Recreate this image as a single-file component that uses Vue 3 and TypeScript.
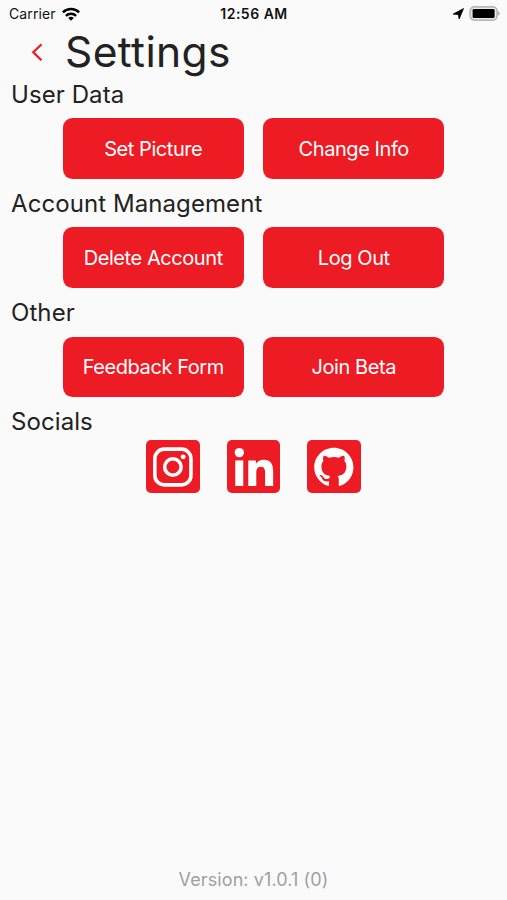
<script setup lang="ts">
interface Section {
  title: string
  actions: string[]
}

const sections: Section[] = [
  { title: 'User Data', actions: ['Set Picture', 'Change Info'] },
  { title: 'Account Management', actions: ['Delete Account', 'Log Out'] },
  { title: 'Other', actions: ['Feedback Form', 'Join Beta'] },
]
</script>

<template>
  <div class="screen">
    <div class="status">
      <div class="carrier">
        <span>Carrier</span>
        <svg class="wifi" viewBox="0 0 18 14" width="18" height="14">
          <g fill="none" stroke="#000" stroke-width="2.5">
            <path d="M0.9 5.3A11.6 11.6 0 0 1 17.1 5.3" />
            <path d="M3.9 8.9A7.3 7.3 0 0 1 14.1 8.9" />
          </g>
          <path d="M9 13.8L6.2 11A4.2 4.2 0 0 1 11.8 11Z" fill="#000" />
        </svg>
      </div>
      <span class="clock">12:56 AM</span>
      <div class="power">
        <svg viewBox="0 0 12 12" width="12" height="12">
          <path d="M11.5 0.6L7.2 11L6.3 6.6L1.2 6.1Z" fill="#000" stroke="#000" stroke-width="0.8" stroke-linejoin="round" />
        </svg>
        <svg viewBox="0 0 31 16" width="31" height="16">
          <rect x="1.2" y="0.9" width="26.8" height="13.2" rx="4" fill="#ececec" stroke="#b8b8b8" stroke-width="1.7" />
          <rect x="3.6" y="2.9" width="22" height="9.2" rx="1.4" fill="#000" />
          <path d="M29 5.3Q30.8 6.2 30.8 7.5T29 9.7Z" fill="#b4b4b4" />
        </svg>
      </div>
    </div>

    <header class="header">
      <svg class="back" viewBox="0 0 12 19" width="12" height="19">
        <path d="M10.5 1.3L2.3 9.3L10.5 17.3" fill="none" stroke="#ed1c24" stroke-width="2.3" />
      </svg>
      <h1>Settings</h1>
    </header>

    <section v-for="section in sections" :key="section.title" class="section">
      <h2>{{ section.title }}</h2>
      <div class="actions">
        <button v-for="action in section.actions" :key="action" type="button">{{ action }}</button>
      </div>
    </section>

    <section class="section">
      <h2>Socials</h2>
      <div class="socials">
        <a class="social">
          <svg viewBox="0 0 54 54">
            <rect x="8.9" y="9.2" width="36.4" height="36" rx="9.5" fill="none" stroke="#fff" stroke-width="3.6" />
            <circle cx="27.1" cy="27.2" r="8.3" fill="none" stroke="#fff" stroke-width="3.6" />
            <circle cx="37.4" cy="17" r="2.5" fill="#fff" />
          </svg>
        </a>
        <a class="social">
          <svg viewBox="0 0 54 54">
            <circle cx="12.4" cy="12.7" r="4.7" fill="#fff" />
            <path d="M8.3 20.6H16.4V46.3H8.3Z" fill="#fff" />
            <path d="M21.4 20.6H29.1V24.1C30.5 21.7 33.2 20 37 20C44.8 20 46.5 25.1 46.5 32.1V46.3H38.4V33.7C38.4 30.6 38.2 27 34.2 27C30.2 27 29.5 30.1 29.5 33.4V46.3H21.4Z" fill="#fff" />
          </svg>
        </a>
        <a class="social">
          <svg viewBox="0 0 54 54">
            <path transform="translate(7.3 7.7) scale(2.47)" fill="#fff" d="M8 0C3.58 0 0 3.58 0 8c0 3.54 2.29 6.53 5.47 7.59.4.07.55-.17.55-.38 0-.19-.01-.82-.01-1.49-2.01.37-2.53-.49-2.69-.94-.09-.23-.48-.94-.82-1.13-.28-.15-.68-.52-.01-.53.63-.01 1.08.58 1.23.82.72 1.21 1.87.87 2.33.66.07-.52.28-.87.51-1.07-1.78-.2-3.64-.89-3.64-3.95 0-.87.31-1.59.82-2.15-.08-.2-.36-1.02.08-2.12 0 0 .67-.21 2.2.82.64-.18 1.32-.27 2-.27s1.36.09 2 .27c1.53-1.04 2.2-.82 2.2-.82.44 1.1.16 1.92.08 2.12.51.56.82 1.27.82 2.15 0 3.07-1.87 3.75-3.65 3.95.29.25.54.73.54 1.48 0 1.07-.01 1.93-.01 2.2 0 .21.15.46.55.38A8.01 8.01 0 0 0 16 8c0-4.42-3.58-8-8-8z" />
          </svg>
        </a>
      </div>
    </section>

    <footer class="version">Version: v1.0.1 (0)</footer>
  </div>
</template>

<style>
body {
  background: #fafafa;
}
</style>

<style scoped>
.screen {
  box-sizing: border-box;
  display: flex;
  flex-direction: column;
  height: 900px;
  background: #fafafa;
  color: #222;
  font-family: Inter, 'Liberation Sans', sans-serif;
}

.status {
  display: grid;
  grid-template-columns: 1fr auto 1fr;
  align-items: center;
  height: 27px;
  padding: 0 7px 0 9px;
  color: #111;
  font-size: 14px;
}

.carrier {
  display: flex;
  align-items: center;
  gap: 6px;
  letter-spacing: 0.12px;
}

.clock {
  padding-right: 1px;
  font-weight: 600;
  letter-spacing: 0.5px;
}

.power {
  display: flex;
  align-items: center;
  justify-content: flex-end;
  gap: 5px;
}

.header {
  display: flex;
  align-items: center;
  gap: 22px;
  height: 50px;
  padding-left: 31px;
}

h1,
h2 {
  margin: 0;
  font-weight: 400;
}

h1 {
  font-size: 42.5px;
  letter-spacing: 0.4px;
  line-height: 50px;
}

h2 {
  height: 41.4px;
  padding-left: 11px;
  font-size: 24px;
  letter-spacing: 0.08px;
  line-height: 35px;
}

.section {
  display: flex;
  flex-direction: column;
  height: 109.1px;
}

.actions {
  display: flex;
  justify-content: center;
  gap: 19.5px;
}

button {
  width: 181px;
  height: 60.4px;
  padding: 0;
  border: 0;
  border-radius: 9.5px;
  background: #ed1c24;
  color: #fff;
  font: inherit;
  font-size: 20px;
  letter-spacing: -0.43px;
}

.socials {
  display: flex;
  justify-content: center;
  gap: 27px;
  margin-top: -6px;
}

.social {
  width: 53.6px;
  height: 53.6px;
  border-radius: 5px;
  background: #ed1c24;
}

.social svg {
  display: block;
  width: 100%;
  height: 100%;
}

.version {
  margin-top: auto;
  padding-bottom: 9px;
  color: #a0a0a0;
  font-size: 18px;
  letter-spacing: 0.1px;
  line-height: 22px;
  text-align: center;
}
</style>
